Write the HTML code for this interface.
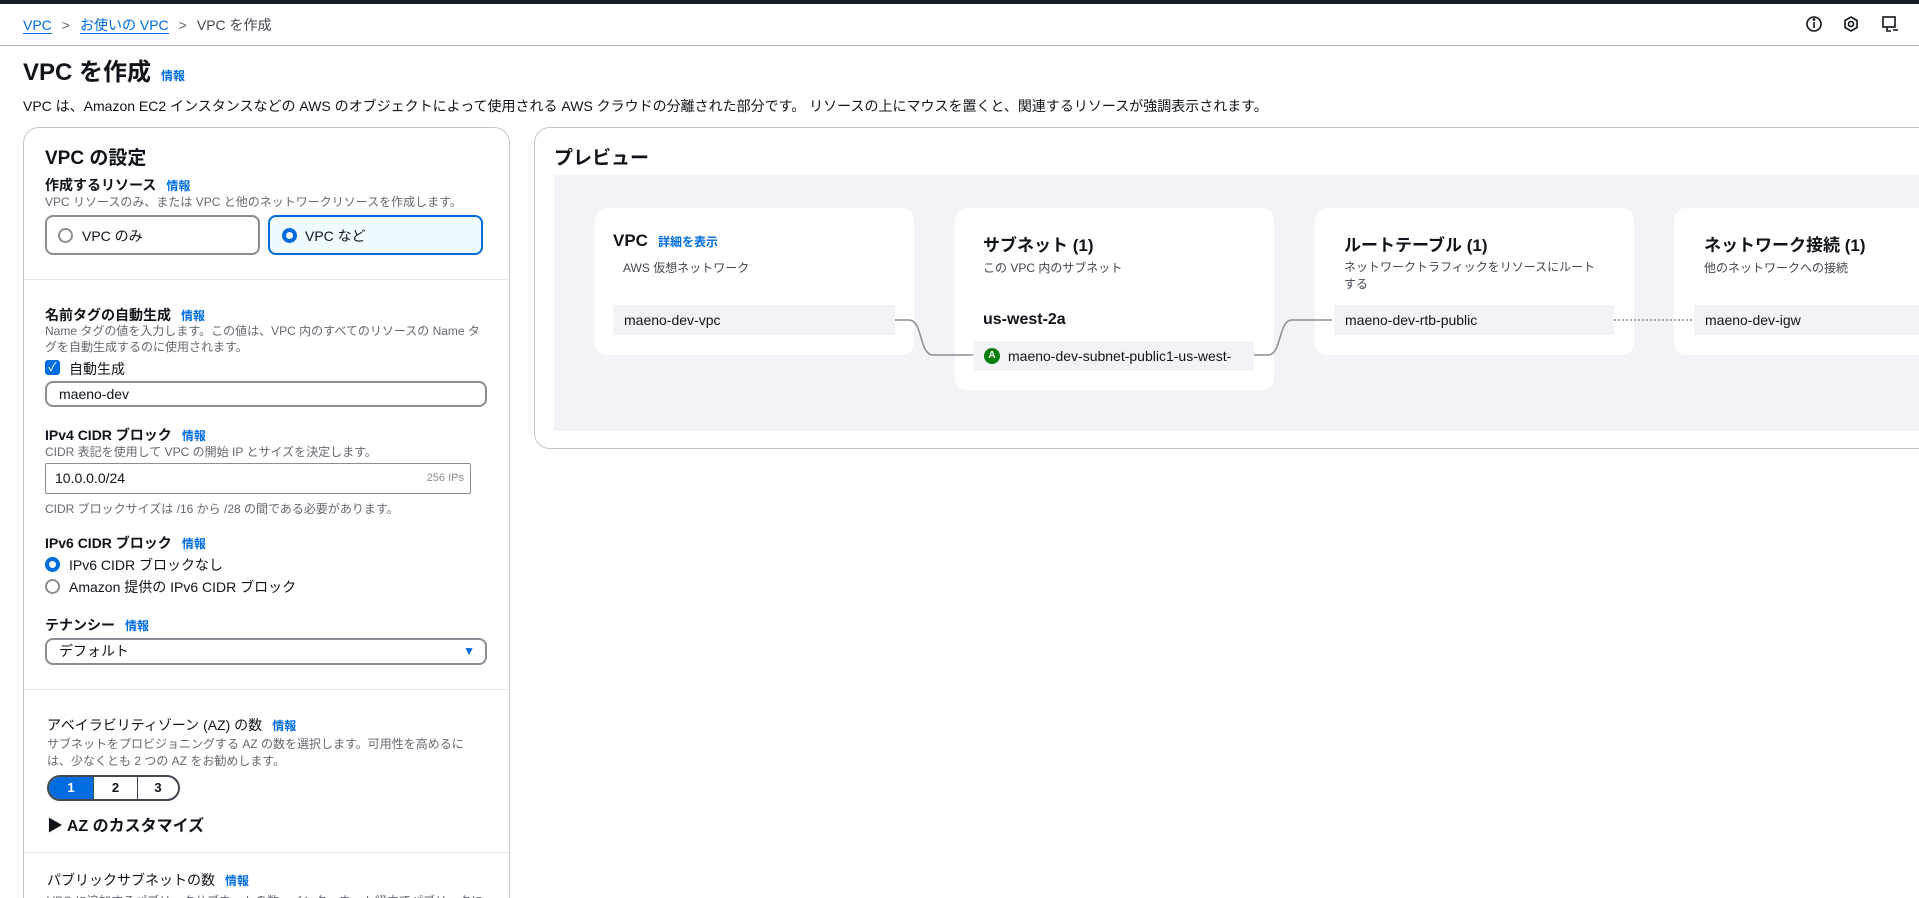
<!DOCTYPE html>
<html><head><meta charset="utf-8"><style>
*{box-sizing:border-box;margin:0;padding:0}
html{overflow:hidden;height:898px}
body{width:1919px;height:898px;overflow:hidden;background:#fff;font-family:"Liberation Sans","Noto Sans CJK JP",sans-serif;color:#0f141a;font-size:14px;position:relative}
.a{position:absolute;white-space:nowrap}
.info{color:#006ce0;font-weight:bold;font-size:12px;margin-left:10px}
.lbl{font-weight:bold;font-size:14px}
.sub{font-size:12px;color:#656871}
.card{position:absolute;background:#fff;border-radius:12px}
.item{position:absolute;background:#f3f3f7;height:30px;line-height:30px;padding-left:11px;font-size:14px}
.ct{font-size:17px;font-weight:bold}
</style></head><body>
<div class="a" style="left:0;top:0;width:1919px;height:4px;background:#161d26"></div>
<div class="a" style="left:23px;top:15px;font-size:14px"><span style="color:#006ce0;border-bottom:1px solid #006ce0">VPC</span><span style="color:#656871;margin:0 10px">&gt;</span><span style="color:#006ce0;border-bottom:1px solid #006ce0">お使いの VPC</span><span style="color:#656871;margin:0 10px">&gt;</span><span style="color:#424650">VPC を作成</span></div>
<svg class="a" style="left:1805px;top:14px" width="100" height="22" fill="none" stroke="#0f141a" stroke-width="1.6">
<circle cx="9" cy="10" r="7"/><line x1="9" y1="8" x2="9" y2="14"/><circle cx="9" cy="5.5" r="0.6" fill="#0f141a"/>
<path d="M46 3l6 3.5v7L46 17l-6-3.5v-7z"/><circle cx="46" cy="10" r="2.5"/>
<rect x="78" y="3" width="12" height="10"/><path d="M82 13v4h4M88 16h5"/>
</svg>
<div class="a" style="left:0;top:45px;width:1919px;height:1px;background:#b4b4bb"></div>
<div class="a" style="left:23px;top:52px;font-size:24px;font-weight:bold">VPC を作成<span class="info" style="font-size:12px">情報</span></div>
<div class="a" style="left:23px;top:96px;font-size:14px">VPC は、Amazon EC2 インスタンスなどの AWS のオブジェクトによって使用される AWS クラウドの分離された部分です。 リソースの上にマウスを置くと、関連するリソースが強調表示されます。</div>

<div class="a" style="left:23px;top:127px;width:487px;height:900px;border:1px solid #c6c6cd;border-radius:16px"></div>
<div class="a" style="left:45px;top:143px;font-size:19px;font-weight:bold">VPC の設定</div>
<div class="a lbl" style="left:45px;top:175px">作成するリソース<span class="info">情報</span></div>
<div class="a sub" style="left:45px;top:193px">VPC リソースのみ、または VPC と他のネットワークリソースを作成します。</div>
<div class="a" style="left:45px;top:215px;width:215px;height:40px;border:2px solid #8c8c94;border-radius:8px"></div>
<div class="a" style="left:58px;top:228px;width:15px;height:15px;border:2px solid #8c8c94;border-radius:50%"></div>
<div class="a" style="left:82px;top:226px">VPC のみ</div>
<div class="a" style="left:268px;top:215px;width:215px;height:40px;border:2px solid #006ce0;border-radius:8px;background:#f0fbff"></div>
<div class="a" style="left:282px;top:228px;width:15px;height:15px;border:4px solid #006ce0;border-radius:50%;background:#fff"></div>
<div class="a" style="left:305px;top:226px">VPC など</div>
<div class="a" style="left:24px;top:279px;width:485px;height:1px;background:#e9e9ed"></div>
<div class="a lbl" style="left:45px;top:305px">名前タグの自動生成<span class="info">情報</span></div>
<div class="a sub" style="left:45px;top:323px;line-height:16px">Name タグの値を入力します。この値は、VPC 内のすべてのリソースの Name タ<br>グを自動生成するのに使用されます。</div>
<div class="a" style="left:45px;top:360px;width:15px;height:15px;background:#006ce0;border-radius:3px;color:#fff;font-size:12px;line-height:15px;text-align:center">✓</div>
<div class="a" style="left:69px;top:359px">自動生成</div>
<div class="a" style="left:45px;top:381px;width:442px;height:26px;border:2px solid #8c8c94;border-radius:8px;padding-left:12px;line-height:22px">maeno-dev</div>
<div class="a lbl" style="left:45px;top:425px">IPv4 CIDR ブロック<span class="info">情報</span></div>
<div class="a sub" style="left:45px;top:443px">CIDR 表記を使用して VPC の開始 IP とサイズを決定します。</div>
<div class="a" style="left:45px;top:463px;width:426px;height:31px;border:1px solid #8c8c94;border-radius:2px;padding-left:9px;line-height:29px">10.0.0.0/24<span style="position:absolute;right:6px;font-size:11px;color:#8c8c94">256 IPs</span></div>
<div class="a sub" style="left:45px;top:500px">CIDR ブロックサイズは /16 から /28 の間である必要があります。</div>
<div class="a lbl" style="left:45px;top:533px">IPv6 CIDR ブロック<span class="info">情報</span></div>
<div class="a" style="left:45px;top:557px;width:15px;height:15px;border:4px solid #006ce0;border-radius:50%"></div>
<div class="a" style="left:69px;top:555px">IPv6 CIDR ブロックなし</div>
<div class="a" style="left:45px;top:579px;width:15px;height:15px;border:2px solid #8c8c94;border-radius:50%"></div>
<div class="a" style="left:69px;top:577px">Amazon 提供の IPv6 CIDR ブロック</div>
<div class="a lbl" style="left:45px;top:615px">テナンシー<span class="info">情報</span></div>
<div class="a" style="left:45px;top:638px;width:442px;height:27px;border:2px solid #8c8c94;border-radius:8px;padding-left:12px;line-height:23px">デフォルト<span style="position:absolute;right:10px;color:#006ce0;font-size:12px">▼</span></div>
<div class="a" style="left:24px;top:689px;width:485px;height:1px;background:#e9e9ed"></div>
<div class="a" style="left:47px;top:715px">アベイラビリティゾーン (AZ) の数<span class="info">情報</span></div>
<div class="a sub" style="left:47px;top:736px;line-height:17px">サブネットをプロビジョニングする AZ の数を選択します。可用性を高めるに<br>は、少なくとも 2 つの AZ をお勧めします。</div>
<div class="a" style="left:47px;top:775px;width:133px;height:26px;border:2px solid #424650;border-radius:13px;overflow:hidden;display:flex;font-size:13px;font-weight:bold;line-height:22px;text-align:center">
<div style="width:44px;background:#006ce0;color:#fff">1</div><div style="width:44px;border-left:1px solid #424650">2</div><div style="flex:1;border-left:1px solid #424650">3</div></div>
<div class="a" style="left:47px;top:812px;font-size:16px;font-weight:bold">▶ AZ のカスタマイズ</div>
<div class="a" style="left:24px;top:852px;width:485px;height:1px;background:#e9e9ed"></div>
<div class="a" style="left:47px;top:870px">パブリックサブネットの数<span class="info">情報</span></div>
<div class="a sub" style="left:47px;top:892px">VPC に追加するパブリックサブネットの数。インターネット経由でパブリックに</div>

<div class="a" style="left:534px;top:127px;width:1420px;height:322px;border:1px solid #c6c6cd;border-radius:16px"></div>
<div class="a" style="left:554px;top:143px;font-size:19px;font-weight:bold">プレビュー</div>
<div class="a" style="left:554px;top:175px;width:1365px;height:256px;background:#f3f3f7"></div>
<div class="card" style="left:595px;top:208px;width:319px;height:147px"></div>
<div class="a ct" style="left:613px;top:231px">VPC<span class="info">詳細を表示</span></div>
<div class="a sub" style="left:623px;top:259px;color:#424650">AWS 仮想ネットワーク</div>
<div class="item" style="left:613px;top:305px;width:282px">maeno-dev-vpc</div>
<div class="card" style="left:955px;top:208px;width:319px;height:182px"></div>
<div class="a ct" style="left:983px;top:231px">サブネット (1)</div>
<div class="a sub" style="left:983px;top:259px;color:#424650">この VPC 内のサブネット</div>
<div class="a" style="left:983px;top:311px;font-weight:bold;font-size:16px">us-west-2a</div>
<div class="item" style="left:973px;top:341px;width:281px;padding-left:35px">maeno-dev-subnet-public1-us-west-</div>
<div class="a" style="left:984px;top:348px;width:16px;height:16px;border-radius:50%;background:#037f0c;color:#fff;font-size:10px;font-weight:bold;text-align:center;line-height:16px">A</div>
<div class="card" style="left:1315px;top:208px;width:319px;height:147px"></div>
<div class="a ct" style="left:1344px;top:231px">ルートテーブル (1)</div>
<div class="a sub" style="left:1344px;top:259px;color:#424650;line-height:17px">ネットワークトラフィックをリソースにルート<br>する</div>
<div class="item" style="left:1334px;top:305px;width:280px">maeno-dev-rtb-public</div>
<div class="card" style="left:1674px;top:208px;width:280px;height:147px"></div>
<div class="a ct" style="left:1704px;top:231px">ネットワーク接続 (1)</div>
<div class="a sub" style="left:1704px;top:259px;color:#424650">他のネットワークへの接続</div>
<div class="item" style="left:1694px;top:305px;width:260px">maeno-dev-igw</div>
<svg class="a" style="left:880px;top:300px" width="840" height="80" fill="none" stroke="#8c8c94" stroke-width="1.5">
<path d="M15 20h14c14 0 10 35 24 35h40"/>
<path d="M374 55h14c14 0 10-35 24-35h40"/>
<path d="M734 20h80" stroke-dasharray="2 2"/>
</svg>
</body></html>
